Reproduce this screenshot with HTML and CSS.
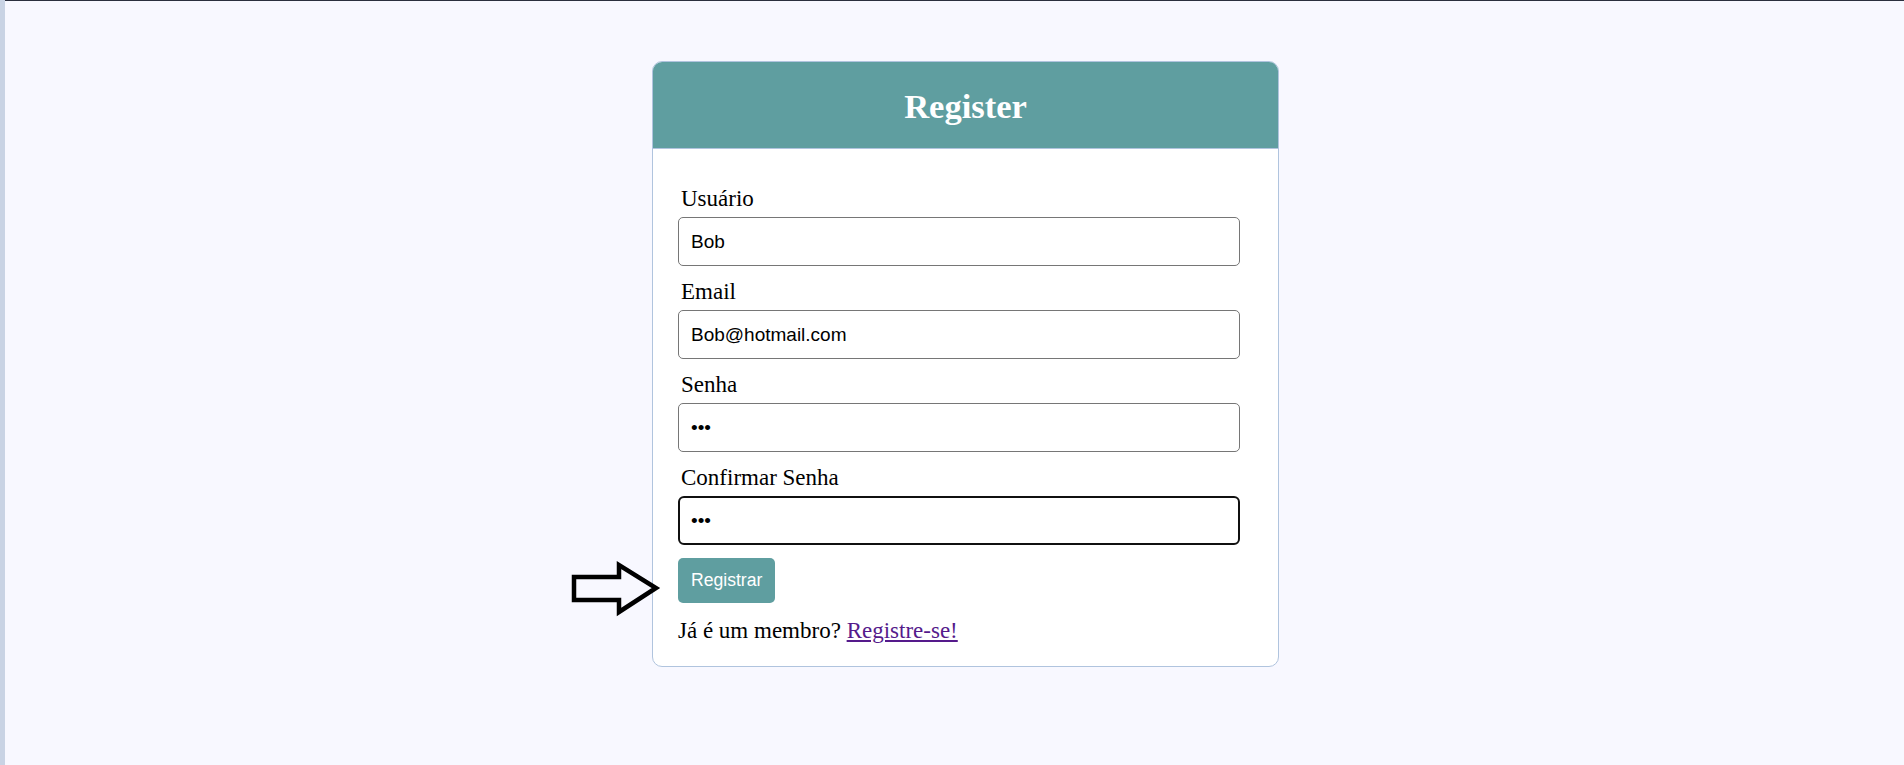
FILE: index.html
```html
<!DOCTYPE html>
<html lang="pt-BR">
<head>
<meta charset="utf-8">
<title>Register</title>
<link rel="stylesheet" href="styles.css">
</head>
<body>
<div class="edge-strip"></div>
<main class="page">
  <section class="card">
    <header class="card-header">
      <h1 class="card-title">Register</h1>
    </header>
    <form class="card-body">
      <label class="field-label" for="usuario">Usuário</label>
      <input class="field-input" id="usuario" type="text" value="Bob">
      <label class="field-label" for="email">Email</label>
      <input class="field-input" id="email" type="text" value="Bob@hotmail.com">
      <label class="field-label" for="senha">Senha</label>
      <input class="field-input" id="senha" type="password" value="123">
      <label class="field-label" for="confirmar">Confirmar Senha</label>
      <input class="field-input is-focused" id="confirmar" type="password" value="123">
      <div class="button-row">
        <svg class="pointer-arrow" width="96" height="62" viewBox="0 0 96 62" aria-hidden="true">
          <polygon points="6,19 51,19 51,7 88,30 51,54 51,42 6,42" fill="none" stroke="#000" stroke-width="4.5" stroke-linejoin="miter"/>
        </svg>
        <button class="submit-btn" type="button">Registrar</button>
      </div>
      <p class="member-text">Já é um membro? <a class="member-link" href="#">Registre-se!</a></p>
    </form>
  </section>
</main>
</body>
</html>
```
FILE: styles.css
```css
html, body {
  margin: 0;
  padding: 0;
}

body {
  display: flex;
  min-height: 100vh;
  background: #f8f8ff;
  font-family: "Liberation Serif", "Times New Roman", serif;
  color: #000;
}

.edge-strip {
  width: 5px;
  flex: none;
  background: #c9d3e4;
}

.page {
  flex: 1;
  border-top: 1px solid #2b2f3e;
  background: #f8f8ff;
  padding-top: 60px;
}

.card {
  width: 627px;
  box-sizing: border-box;
  margin-left: 647px;
  background: #fff;
  border: 1px solid #b0c4de;
  border-radius: 10px;
}

.card-header {
  background: #5f9ea0;
  border-radius: 9px 9px 0 0;
  border-bottom: 1px solid #b0c4de;
  padding: 24px 0 22px;
}

.card-title {
  margin: 0;
  text-align: center;
  color: #fff;
  font-size: 34.5px;
  line-height: 40px;
  font-weight: bold;
}

.card-body {
  padding: 37px 38px 22px 25px;
}

.field-label {
  display: block;
  margin: 0 0 5px 3px;
  font-size: 23px;
  line-height: 26px;
}

.field-input {
  display: block;
  width: 100%;
  height: 49px;
  box-sizing: border-box;
  margin: 0 0 13px;
  padding: 0 12px;
  border: 1px solid #767676;
  border-radius: 5px;
  background: #fff;
  font-family: "Liberation Sans", Arial, sans-serif;
  font-size: 19px;
  color: #000;
  outline: none;
}

.field-input.is-focused {
  border: 2px solid #101010;
  border-radius: 6px;
  padding: 0 11px;
}

.button-row {
  position: relative;
  display: flex;
}

.pointer-arrow {
  position: absolute;
  left: -110px;
  top: 0;
}

.submit-btn {
  padding: 12px 13px;
  border: none;
  border-radius: 5px;
  background: #5f9ea0;
  color: #fff;
  font-family: "Liberation Sans", Arial, sans-serif;
  font-size: 17.6px;
  line-height: 21px;
  cursor: pointer;
}

.member-text {
  margin: 15px 0 0;
  font-size: 23px;
  line-height: 26px;
}

.member-link {
  color: #551a8b;
  text-decoration: underline;
}
```
